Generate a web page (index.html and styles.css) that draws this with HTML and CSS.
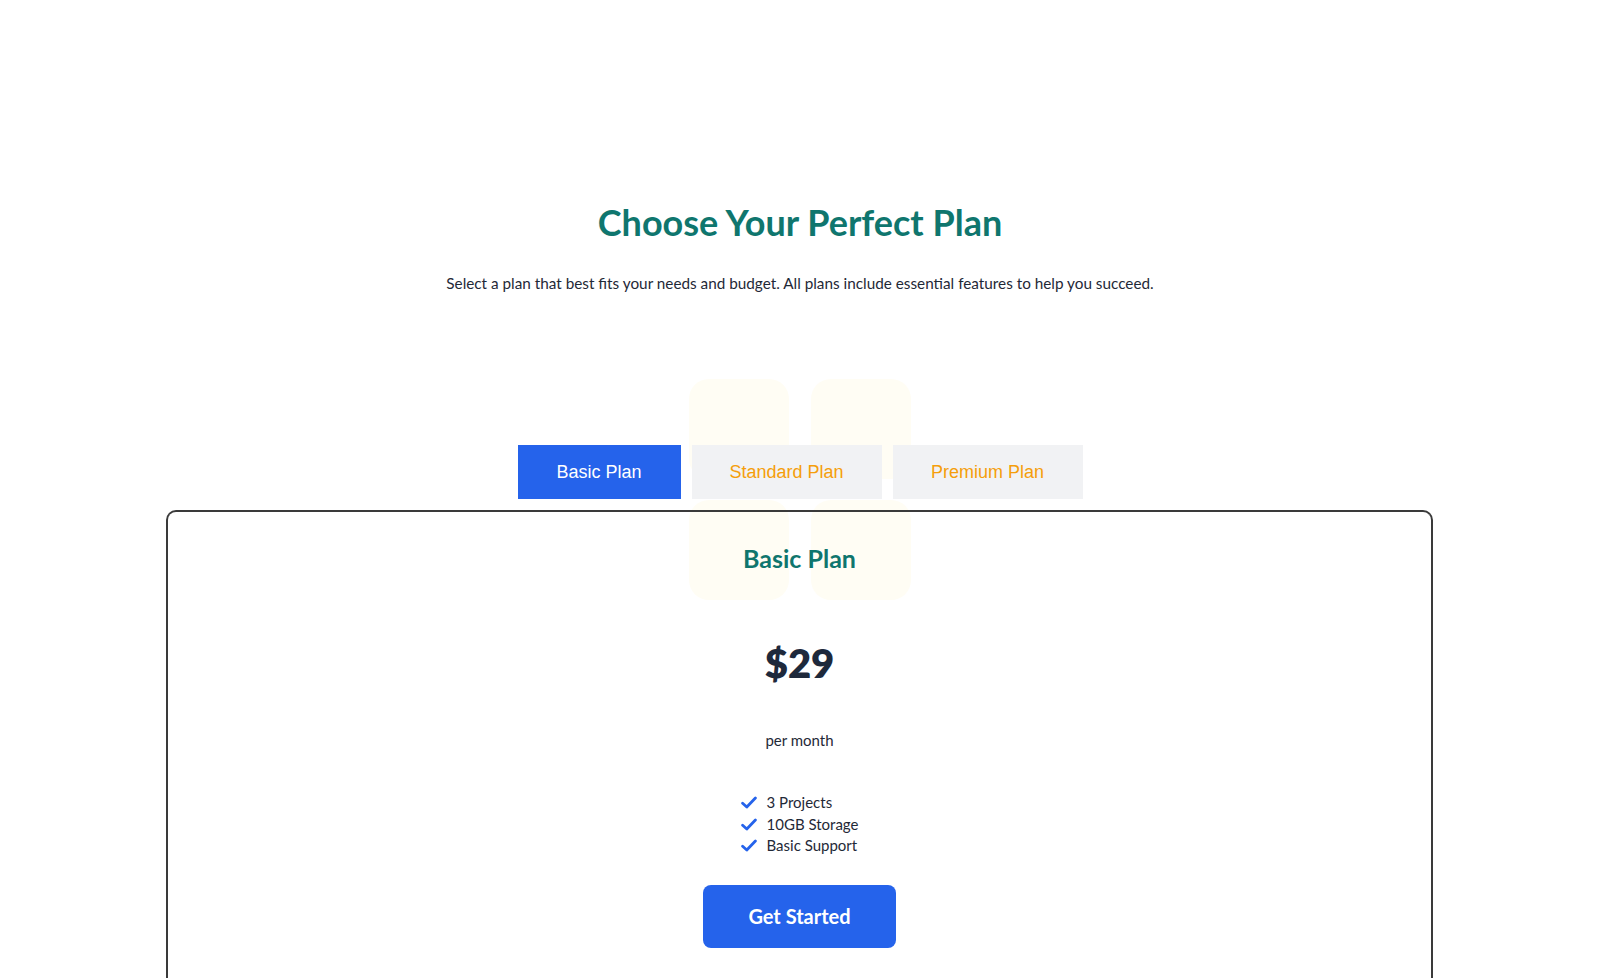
FILE: index.html
```html
<!DOCTYPE html>
<html lang="en">
<head>
<meta charset="utf-8">
<title>Choose Your Perfect Plan</title>
<link rel="stylesheet" href="styles.css">
</head>
<body>
<main class="page">
  <header class="intro">
    <h1 class="title">Choose Your Perfect Plan</h1>
    <p class="subtitle">Select a plan that best fits your needs and budget. All plans include essential features to help you succeed.</p>
  </header>

  <section class="plans">
    <div class="decor" aria-hidden="true">
      <span class="decor-tile"></span>
      <span class="decor-tile"></span>
      <span class="decor-tile"></span>
      <span class="decor-tile"></span>
    </div>

    <div class="tabs">
      <button class="tab tab-active">Basic Plan</button>
      <button class="tab tab-wide">Standard Plan</button>
      <button class="tab tab-wide">Premium Plan</button>
    </div>

    <div class="card">
      <h2 class="plan-name">Basic Plan</h2>
      <div class="price">$29</div>
      <div class="period">per month</div>
      <ul class="features">
        <li class="feature"><svg class="check" viewBox="0 0 16 13" width="16" height="13"><path d="M1.6 7.2 L5.8 11 L14.4 2" fill="none" stroke="#2563eb" stroke-width="2.8" stroke-linecap="round" stroke-linejoin="round"/></svg><span>3 Projects</span></li>
        <li class="feature"><svg class="check" viewBox="0 0 16 13" width="16" height="13"><path d="M1.6 7.2 L5.8 11 L14.4 2" fill="none" stroke="#2563eb" stroke-width="2.8" stroke-linecap="round" stroke-linejoin="round"/></svg><span>10GB Storage</span></li>
        <li class="feature"><svg class="check" viewBox="0 0 16 13" width="16" height="13"><path d="M1.6 7.2 L5.8 11 L14.4 2" fill="none" stroke="#2563eb" stroke-width="2.8" stroke-linecap="round" stroke-linejoin="round"/></svg><span>Basic Support</span></li>
      </ul>
      <button class="cta">Get Started</button>
    </div>
  </section>
</main>
</body>
</html>
```

FILE: styles.css
```css
* { box-sizing: border-box; }

html, body {
  margin: 0;
  padding: 0;
  background: #ffffff;
}

body {
  font-family: "Lato", "Noto Sans", sans-serif;
  color: #1f2937;
  overflow: hidden;
  height: 978px;
}

.page {
  padding-top: 200px;
}

.intro {
  text-align: center;
}

.title {
  margin: 0;
  font-size: 36px;
  line-height: 44px;
  font-weight: 700;
  color: #0f766e;
}

.subtitle {
  margin: 28px 0 0;
  font-size: 15.3px;
  line-height: 22px;
  color: #1f2937;
}

.plans {
  position: relative;
  margin-top: 85px;
}

.decor {
  position: absolute;
  left: 689px;
  top: 0;
  display: grid;
  grid-template-columns: 100px 100px;
  grid-auto-rows: 100px;
  column-gap: 22px;
  row-gap: 21px;
  z-index: 0;
}

.decor-tile {
  display: block;
  border-radius: 20px;
  background: #fffdf4;
}

.tabs {
  position: relative;
  z-index: 1;
  display: flex;
  justify-content: center;
  gap: 11px;
  padding-top: 66px;
}

.tab {
  height: 54px;
  width: 163px;
  border: none;
  padding: 0;
  font-family: "Liberation Sans", Arial, sans-serif;
  font-size: 18px;
  background: #f1f2f4;
  color: #f59e0b;
  cursor: pointer;
}

.tab-wide {
  width: 190px;
}

.tab-active {
  background: #2563eb;
  color: #ffffff;
}

.card {
  position: relative;
  z-index: 1;
  margin: 11px 167px 0 166px;
  border: 2px solid #3a3a3a;
  border-bottom: none;
  border-radius: 10px 10px 0 0;
  height: 500px;
  text-align: center;
  padding-top: 31px;
}

.plan-name {
  margin: 0;
  font-size: 25px;
  line-height: 30px;
  font-weight: 700;
  color: #0f766e;
}

.price {
  margin-top: 66px;
  font-size: 40px;
  line-height: 48px;
  font-weight: 800;
  color: #1e293b;
}

.period {
  margin-top: 42px;
  font-size: 15px;
  line-height: 22px;
  color: #1f2937;
}

.features {
  list-style: none;
  margin: 41px auto 0;
  padding: 0;
  display: inline-flex;
  flex-direction: column;
  align-items: flex-start;
  transform: translateX(13px);
}

.feature {
  display: flex;
  align-items: center;
  gap: 10px;
  font-size: 15px;
  line-height: 21.5px;
  color: #1f2937;
}

.check {
  flex: none;
  margin-left: -26px;
}

.cta {
  display: block;
  margin: 28px auto 0;
  width: 193px;
  height: 63px;
  border: none;
  border-radius: 8px;
  background: #2563eb;
  color: #ffffff;
  font-family: "Lato", "Noto Sans", sans-serif;
  font-size: 20px;
  font-weight: 700;
  cursor: pointer;
}
```
